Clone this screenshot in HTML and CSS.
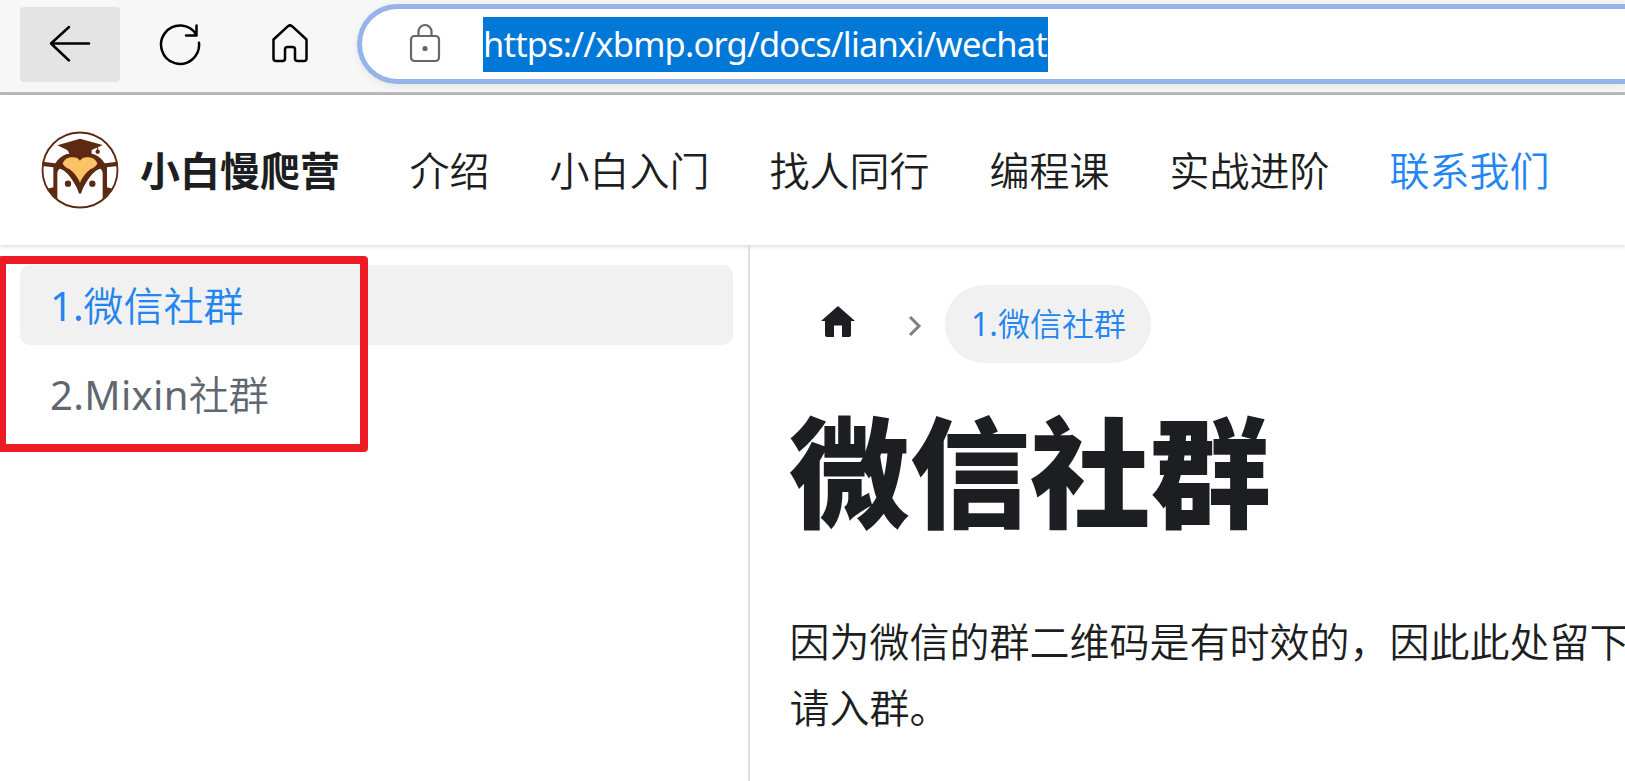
FILE: index.html
```
<!DOCTYPE html>
<html lang="zh-CN">
<head>
<meta charset="utf-8">
<title>微信社群</title>
<link rel="stylesheet" href="styles.css">
</head>
<body>
<div class="toolbar">
  <div class="tool tool-back"><svg width="100" height="75" viewBox="20 7 100 75"><path d="M89 43.500H51M69 27L51 43.500L69 60.500"/></svg></div>
  <div class="tool tool-reload"><svg width="44" height="44" viewBox="158 22 44 44"><path d="M199 42.800A19 19.200 0 1 1 196.500 35M196.500 25.500V35.500H186"/></svg></div>
  <div class="tool tool-home"><svg width="44" height="44" viewBox="268 21 44 44"><path d="M273.500 39.500L288 26.200Q290 24.500 292 26.200L306.500 39.500V58.500Q306.500 61 304 61H297.500Q295 61 295 58.500V49.500Q295 47 292.500 47H287.500Q285 47 285 49.500V58.500Q285 61 282.500 61H276Q273.500 61 273.500 58.500Z"/></svg></div>
  <div class="address">
    <svg class="lock" width="34" height="42" viewBox="408 22 34 42"><rect x="411" y="36" width="28" height="25" rx="3.500"/><path d="M418.500 36V31.500A6.500 6.500 0 0 1 431.500 31.500V36"/><circle cx="425" cy="48.500" r="2.600"/></svg>
    <span class="url">https://xbmp.org/docs/lianxi/wechat</span>
  </div>
</div>
<header class="navbar">
  <svg class="logo" width="80" height="80" viewBox="12 12 240 240">
    <circle cx="132" cy="132" r="113" fill="#fff"/>
    <g fill="#5e2912">
      <path d="M19 107L58 112Q68 94 92 84H172Q196 94 206 112L245 107V120L213 124V184L230 188L218 202L200 224H64L46 202L34 188L52 184V124L19 120Z"/>
      <path d="M64 58L132 38L200 57L167 72V90Q150 88 132 103Q114 88 100 93V84Q98 74 92 71Z"/>
      <path d="M185 60V74" stroke="#5e2912" stroke-width="3"/><circle cx="185" cy="77" r="6.500"/>
    </g>
    <path d="M64 226V145Q64 131 72 128Q96 134 120 180Q126 191 128 200Q132 206 136 200Q138 191 144 180Q168 134 192 128Q200 131 200 145V226Q168 244 132 243Q96 244 64 226Z" fill="#fff"/>
    <path d="M72 127Q100 136 132 203Q164 136 192 127L160 110H104Z" fill="#5e2912"/>
    <path d="M80 112Q88 94 106 94Q124 92 132 104Q140 92 158 94Q176 94 184 112Q181 123 163 130Q143 145 132 170Q121 145 101 130Q83 123 80 112Z" fill="#fac366"/>
    <g fill="#5e2912"><circle cx="96" cy="173" r="9.500"/><circle cx="169" cy="173" r="9.500"/></g>
    <circle cx="132" cy="132" r="112.500" fill="none" stroke="#5e2912" stroke-width="5.500"/>
  </svg>
  <strong class="brand">小白慢爬营</strong>
  <nav class="nav"><a>介绍</a><a>小白入门</a><a>找人同行</a><a>编程课</a><a>实战进阶</a><a class="active">联系我们</a></nav>
</header>
<div class="layout">
  <aside class="sidebar">
    <a class="item active"><span class="latin">1.</span>微信社群</a>
    <a class="item"><span class="latin mixin">2.Mixin</span>社群</a>
    <div class="highlight"></div>
  </aside>
  <main class="content">
    <div class="crumbs">
      <svg class="crumb-home" width="36" height="33" viewBox="0 0 36 33"><path d="M18 1L35 16H31V30Q31 32 29 32H22V20.500H14V32H7Q5 32 5 30V16H1Z"/></svg>
      <svg class="chevron" width="14" height="22" viewBox="0 0 14 22"><path d="M2 2L11 11L2 20"/></svg>
      <span class="pill"><span class="latin">1.</span>微信社群</span>
    </div>
    <h1 class="title">微信社群</h1>
    <p class="text">因为微信的群二维码是有时效的，因此此处留下<br>请入群。</p>
  </main>
</div>
</body>
</html>
```
FILE: styles.css
```
* { box-sizing: border-box; }
body {
  margin: 0;
  width: 1625px;
  height: 781px;
  overflow: hidden;
  display: flex;
  flex-direction: column;
  background: #fff;
  color: #1c1e21;
  font-family: "Noto Sans CJK SC", sans-serif;
  font-size: 40px;
}
svg { display: block; flex: none; }
.toolbar {
  flex: none;
  height: 95px;
  padding: 4px 0 0 20px;
  display: flex;
  align-items: flex-start;
  background: #f7f7f7;
  border-bottom: 3px solid #bdbdbd;
}
.tool { flex: none; }
.tool svg { fill: none; stroke: #000; stroke-width: 2.500; stroke-linecap: round; stroke-linejoin: round; }
.tool-back { margin-top: 3px; border-radius: 4px; background: #e4e4e4; }
.tool-reload { margin: 18px 0 0 38px; }
.tool-home { margin: 17px 0 0 66px; }
.address {
  flex: 1;
  display: flex;
  align-items: center;
  height: 80px;
  margin-left: 45px;
  padding-left: 46px;
  border: 5px solid #94b4ea;
  border-right: 0;
  border-radius: 40px 0 0 40px;
  background: #fff;
  box-shadow: 0 2px 8px rgba(0, 0, 0, .08);
}
.lock { fill: none; stroke: #666; stroke-width: 2.200; margin-top: -2px; }
.lock circle { fill: #666; stroke: none; }
.url {
  margin-left: 41px;
  width: 565px;
  height: 55px;
  line-height: 54px;
  background: #0078d7;
  color: #fff;
  font-family: "Noto Sans", sans-serif;
  font-size: 34.500px;
  letter-spacing: -.82px;
  white-space: nowrap;
}
.navbar {
  flex: none;
  position: relative;
  height: 150px;
  padding-left: 40px;
  display: flex;
  align-items: center;
  background: #fff;
  box-shadow: 0 1px 5px rgba(0, 0, 0, .18);
}
.brand { margin: -2px 0 0 20px; width: 200px; font-weight: 700; line-height: 60px; }
.nav { display: flex; gap: 60px; margin: -2px 0 0 69.500px; line-height: 60px; white-space: nowrap; font-weight: 350; }
.active { color: #2385f0; }
.layout { flex: 1; display: flex; min-height: 0; }
.sidebar {
  position: relative;
  flex: none;
  width: 750px;
  padding: 20px 15px 0 20px;
  border-right: 2px solid #dadde1;
}
.item {
  display: block;
  height: 80px;
  margin-bottom: 10px;
  padding-left: 30px;
  border-radius: 10px;
  line-height: 77px;
  font-weight: 350;
  color: #606770;
}
.item.active { background: #f1f1f1; color: #2385f0; line-height: 78px; }
.latin { font-family: "Noto Sans", sans-serif; font-weight: 400; }
.mixin { letter-spacing: .35px; }
.highlight {
  position: absolute;
  left: -2px;
  top: 11px;
  width: 370px;
  height: 196px;
  border: 8px solid #ed1c24;
  border-radius: 4px;
}
.content { flex: 1; min-width: 0; padding: 40px 0 0 40px; }
.crumbs { display: flex; height: 78px; align-items: center; }
.crumb-home { margin: -5px 0 0 30px; fill: #1c1e21; }
.chevron { margin: 4px 0 0 52px; fill: none; stroke: #808080; stroke-width: 3; }
.pill {
  margin-left: 23px;
  width: 206px;
  height: 78px;
  padding-left: 26px;
  border-radius: 39px;
  line-height: 75px;
  font-size: 32px;
  font-weight: 350;
  background: #f1f1f1;
  color: #2385f0;
  white-space: nowrap;
}
.title { margin: 29px 0 0 -1px; font-size: 120.500px; line-height: 150px; font-weight: 900; white-space: nowrap; }
.text { margin: 65px 0 0 -.5px; font-weight: 350; line-height: 66px; white-space: nowrap; }
```
